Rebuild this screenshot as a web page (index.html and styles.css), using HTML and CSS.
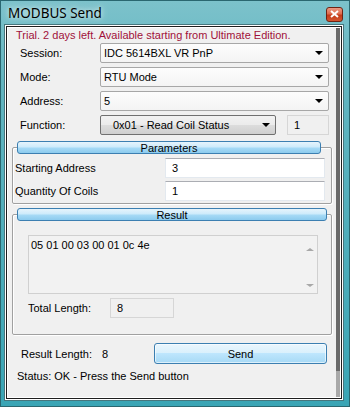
FILE: index.html
```html
<!DOCTYPE html>
<html lang="en">
<head>
  <meta charset="UTF-8">
  <title>MODBUS Send</title>
  <link rel="stylesheet" href="styles.css">
</head>
<body>
<div class="window">
  <div class="titlebar">
    <span class="title">MODBUS Send</span>
    <span class="close">
      <svg width="9" height="8" viewBox="0 0 9 8"><path d="M1 1 L8 7 M8 1 L1 7" stroke="#fff" stroke-width="2"/></svg>
    </span>
  </div>

  <div class="client">
    <div class="content">
      <p class="trial">Trial. 2 days left. Available starting from Ultimate Edition.</p>

      <div class="form">
        <label>Session:</label>
        <div class="combo"><span>IDC 5614BXL VR PnP</span><i class="arrow"></i></div>

        <label>Mode:</label>
        <div class="combo"><span>RTU Mode</span><i class="arrow"></i></div>

        <label>Address:</label>
        <div class="combo"><span>5</span><i class="arrow"></i></div>

        <label>Function:</label>
        <div class="func-row">
          <div class="combo combo-button"><span>0x01 - Read Coil Status</span><i class="arrow"></i></div>
          <div class="field field-disabled">1</div>
        </div>
      </div>

      <!-- Parámetros -->
      <div class="group group-params">
        <div class="group-header">Parameters</div>
        <div class="param-row">
          <label>Starting Address</label>
          <div class="field">3</div>
        </div>
        <div class="param-row">
          <label>Quantity Of Coils</label>
          <div class="field">1</div>
        </div>
      </div>

      <!-- Resultado -->
      <div class="group group-result">
        <div class="group-header">Result</div>
        <div class="result-box">
          <span>05 01 00 03 00 01 0c 4e</span>
          <div class="scroll">
            <i class="scroll-up"></i>
            <i class="scroll-down"></i>
          </div>
        </div>
        <div class="total-row">
          <label>Total Length:</label>
          <div class="field field-disabled">8</div>
        </div>
      </div>

      <div class="send-row">
        <label>Result Length:</label>
        <span class="result-len">8</span>
        <button class="send-button">Send</button>
      </div>
      <p class="status">Status: OK - Press the Send button</p>
    </div>
    <div class="side-bar"></div>
  </div>
</div>
</body>
</html>
```

FILE: styles.css
```css
* {
  box-sizing: border-box;
  margin: 0;
  padding: 0;
}

body {
  font-family: "Liberation Sans", Arial, sans-serif;
  font-size: 11px;
  color: #000;
  background: #fff;
}

/* Marco de la ventana */
.window {
  width: 350px;
  height: 407px;
  border: 1px solid #2a6770;
  background: linear-gradient(to bottom, #7cc2cb 0%, #63b5c0 20%, #3aa5b5 100%);
  padding: 0 7px 7px 5px;
  display: flex;
  flex-direction: column;
}

.titlebar {
  height: 23px;
  margin-bottom: 2px;
  display: flex;
  align-items: center;
  justify-content: space-between;
  padding: 0 0 0 2px;
}

.title {
  font-family: "Noto Sans", sans-serif;
  font-size: 13.5px;
  color: #000;
  text-shadow: 0 0 8px rgba(255, 255, 255, 0.8), 0 0 4px rgba(255, 255, 255, 0.6);
}

.close {
  width: 17px;
  height: 15px;
  margin-right: -1px;
  margin-top: 3px;
  border: 1px solid #6e2414;
  border-radius: 3px;
  background: linear-gradient(to bottom, #eb9a84 0%, #dd6a4c 45%, #c23a18 55%, #d4552f 100%);
  display: flex;
  align-items: center;
  justify-content: center;
}

.client {
  flex: 1;
  display: flex;
  border: 1px solid #1e1e1e;
  box-shadow: 0 0 0 1px #fff, 0 0 0 2px #46767d, inset 0 0 0 1px #fff;
  background: #f0f0f0;
  padding: 1px;
}

.content {
  flex: 1;
  display: flex;
  flex-direction: column;
}

.side-bar {
  width: 4px;
  background: linear-gradient(to bottom, #6a6a6a 0%, #6a6a6a 93%, #a8a8a8 93%);
}

.trial {
  color: #a0103a;
  padding: 1px 0 0 8px;
  line-height: 13px;
}

/* Formulario principal */
.form {
  display: grid;
  grid-template-columns: 80px 1fr;
  row-gap: 4px;
  align-items: center;
  padding: 1px 7px 0 12px;
}

.combo {
  height: 20px;
  display: flex;
  align-items: center;
  justify-content: space-between;
  padding: 0 5px 0 3px;
  border: 1px solid #a7a7a7;
  border-radius: 2px;
  background: linear-gradient(to bottom, #fdfdfd, #f4f4f4);
}

.combo-button {
  flex: 1;
  padding: 0 5px 0 12px;
  border-color: #707070;
  background: linear-gradient(to bottom, #f2f2f2 0%, #ebebeb 50%, #dddddd 50%, #cfcfcf 100%);
}

.arrow {
  width: 0;
  height: 0;
  border-left: 4px solid transparent;
  border-right: 4px solid transparent;
  border-top: 4px solid #000;
}

.func-row {
  display: flex;
  gap: 11px;
}

.func-row .field {
  width: 42px;
}

.field {
  height: 20px;
  display: flex;
  align-items: center;
  padding: 0 6px;
  background: #fff;
  border: 1px solid #e3e9ef;
  border-top-color: #abadb3;
}

.field-disabled {
  background: #f0f0f0;
  border-color: #d6d6d6;
}

/* Grupos */
.group {
  margin: 0 4px;
  border: 1px solid #a0a0a0;
  box-shadow: 1px 1px 0 #fff, inset 1px 1px 0 #fff;
  border-radius: 2px;
}

.group-params {
  margin-top: 12px;
  padding: 0 6px 2px 2px;
}

.group-result {
  margin-top: 10px;
  padding: 0 13px 16px 15px;
}

.group-header {
  height: 13px;
  margin-top: -7px;
  line-height: 12px;
  text-align: center;
  border: 1px solid #3c7fb1;
  border-radius: 3px;
  background: linear-gradient(to bottom, #e6f4fc 0%, #cdebfb 45%, #a6daf6 55%, #8ccbee 100%);
}

.group-params .group-header {
  margin: -7px 4px 0 2px;
}

.group-result .group-header {
  margin: -7px -9px 0 -11px;
}

.param-row {
  display: flex;
  justify-content: space-between;
  align-items: center;
  margin-top: 3px;
}

.group-params .group-header + .param-row {
  margin-top: 4px;
}

.param-row .field {
  width: 160px;
}

.result-box {
  margin-top: 14px;
  height: 59px;
  display: flex;
  justify-content: space-between;
  border: 1px solid #d0d0d0;
  background: #f2f2f2;
  padding: 3px 0 0 2px;
}

.scroll {
  width: 14px;
  display: flex;
  flex-direction: column;
  justify-content: space-between;
  align-items: center;
  padding: 9px 0 6px;
}

.scroll-up,
.scroll-down {
  width: 0;
  height: 0;
  border-left: 4px solid transparent;
  border-right: 4px solid transparent;
}

.scroll-up {
  border-bottom: 3px solid #a8a8a8;
}

.scroll-down {
  border-top: 3px solid #a8a8a8;
}

.total-row {
  display: flex;
  align-items: center;
  margin-top: 4px;
}

.total-row label {
  width: 82px;
}

.total-row .field {
  width: 64px;
}

/* Fila inferior */
.send-row {
  display: flex;
  align-items: center;
  margin-top: 8px;
  padding: 0 9px 0 13px;
}

.send-row label {
  width: 81px;
}

.result-len {
  flex: 1;
}

.send-button {
  width: 173px;
  height: 21px;
  font: inherit;
  border: 1px solid #3c7fb1;
  border-radius: 3px;
  background: linear-gradient(to bottom, #eaf6fd 0%, #d9f0fc 50%, #bee6fd 50%, #a7d9f5 100%);
  box-shadow: inset 0 0 0 1px rgba(255, 255, 255, 0.6);
}

.status {
  padding: 6px 0 0 9px;
  line-height: 13px;
}
```
